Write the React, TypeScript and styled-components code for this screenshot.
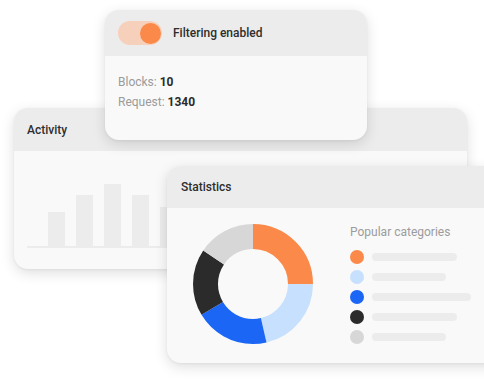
import React from "react"
import styled, { createGlobalStyle } from "styled-components"

const GlobalStyle = createGlobalStyle`
  * {
    box-sizing: border-box;
  }
  body {
    margin: 0;
    background: #ffffff;
    font-family: Roboto, "Liberation Sans", Arial, sans-serif;
    color: #2b2b2b;
  }
`

const Stage = styled.div`
  position: relative;
  width: 484px;
  height: 380px;
  overflow: hidden;
  background: #ffffff;
`

const Card = styled.div<{ $x: number; $y: number; $w: number; $h: number; $z: number }>`
  position: absolute;
  left: ${(p) => p.$x}px;
  top: ${(p) => p.$y}px;
  width: ${(p) => p.$w}px;
  height: ${(p) => p.$h}px;
  z-index: ${(p) => p.$z};
  display: flex;
  flex-direction: column;
  border-radius: 14px;
  overflow: hidden;
  background: #f9f9f9;
  box-shadow: 0 4px 14px rgba(0, 0, 0, 0.13), 0 1px 3px rgba(0, 0, 0, 0.05);
`

const CardHeader = styled.div<{ $h: number; $pad?: number }>`
  display: flex;
  align-items: center;
  gap: 11px;
  height: ${(p) => p.$h}px;
  flex-shrink: 0;
  padding: 0 ${(p) => p.$pad ?? 13}px;
  background: #ececec;
  font-size: 12px;
  font-weight: 500;
  color: #2e2e2e;
`

const Toggle = styled.div`
  display: flex;
  align-items: center;
  justify-content: flex-end;
  width: 44px;
  height: 24px;
  padding: 0 1px;
  border-radius: 12px;
  background: #f6d0ba;
`

const Thumb = styled.div`
  width: 21px;
  height: 21px;
  border-radius: 50%;
  background: #fa894a;
`

const Stats = styled.div`
  display: flex;
  flex-direction: column;
  gap: 5px;
  padding: 19px 13px 0;
  font-size: 12px;
  line-height: 15px;
  color: #9b9b9b;
  b {
    font-weight: 700;
    color: #2b2b2b;
  }
`

const Chart = styled.div`
  flex: 1;
  display: flex;
  align-items: flex-end;
  gap: 11px;
  margin: 0 0 21px 13px;
  padding-left: 21px;
  border-bottom: 2px solid #ececec;
`

const Bar = styled.div`
  width: 17px;
  background: #ececec;
`

const StatsBody = styled.div`
  display: flex;
  align-items: flex-start;
  padding: 16px 0 0 26px;
`

const Donut = styled.svg`
  display: block;
  flex-shrink: 0;
`

const Legend = styled.div`
  display: flex;
  flex-direction: column;
  margin-left: 37px;
`

const LegendTitle = styled.div`
  font-size: 12px;
  color: #9c9c9c;
  line-height: 16px;
  margin-bottom: 7px;
`

const LegendRow = styled.div`
  display: flex;
  align-items: center;
  gap: 8px;
  height: 20px;
`

const Dot = styled.div<{ $c: string }>`
  width: 14px;
  height: 14px;
  border-radius: 50%;
  background: ${(p) => p.$c};
`

const Line = styled.div`
  height: 8px;
  border-radius: 4px;
  background: #ececec;
`

const bars = [34, 51, 62, 51, 39, 46, 58, 40, 52, 44, 36]

const segments = [
  { color: "#fa894a", value: 0.25, line: 85 },
  { color: "#c6e0fd", value: 0.213, line: 74 },
  { color: "#1b66f5", value: 0.2, line: 99 },
  { color: "#2b2b2b", value: 0.18, line: 85 },
  { color: "#d7d7d7", value: 0.157, line: 74 },
]

const R = 47.5
const C = 2 * Math.PI * R

export default function App() {
  let offset = 0
  return (
    <Stage>
      <GlobalStyle />

      <Card $x={14} $y={108} $w={453} $h={161} $z={1}>
        <CardHeader $h={43}>Activity</CardHeader>
        <Chart>
          {bars.map((h, i) => (
            <Bar key={i} style={{ height: h }} />
          ))}
        </Chart>
      </Card>

      <Card $x={105} $y={10} $w={262} $h={130} $z={2}>
        <CardHeader $h={46}>
          <Toggle>
            <Thumb />
          </Toggle>
          Filtering enabled
        </CardHeader>
        <Stats>
          <div>
            Blocks: <b>10</b>
          </div>
          <div>
            Request: <b>1340</b>
          </div>
        </Stats>
      </Card>

      <Card $x={167} $y={166} $w={340} $h={197} $z={3}>
        <CardHeader $h={42} $pad={14}>
          Statistics
        </CardHeader>
        <StatsBody>
          <Donut width="120" height="120" viewBox="0 0 120 120">
            <g transform="rotate(-90 60 60)">
              {segments.map((s, i) => {
                const len = s.value * C
                const el = (
                  <circle
                    key={i}
                    cx="60"
                    cy="60"
                    r={R}
                    fill="none"
                    stroke={s.color}
                    strokeWidth="25"
                    strokeDasharray={`${len} ${C - len}`}
                    strokeDashoffset={-offset}
                  />
                )
                offset += len
                return el
              })}
            </g>
          </Donut>
          <Legend>
            <LegendTitle>Popular categories</LegendTitle>
            {segments.map((s, i) => (
              <LegendRow key={i}>
                <Dot $c={s.color} />
                <Line style={{ width: s.line }} />
              </LegendRow>
            ))}
          </Legend>
        </StatsBody>
      </Card>
    </Stage>
  )
}
